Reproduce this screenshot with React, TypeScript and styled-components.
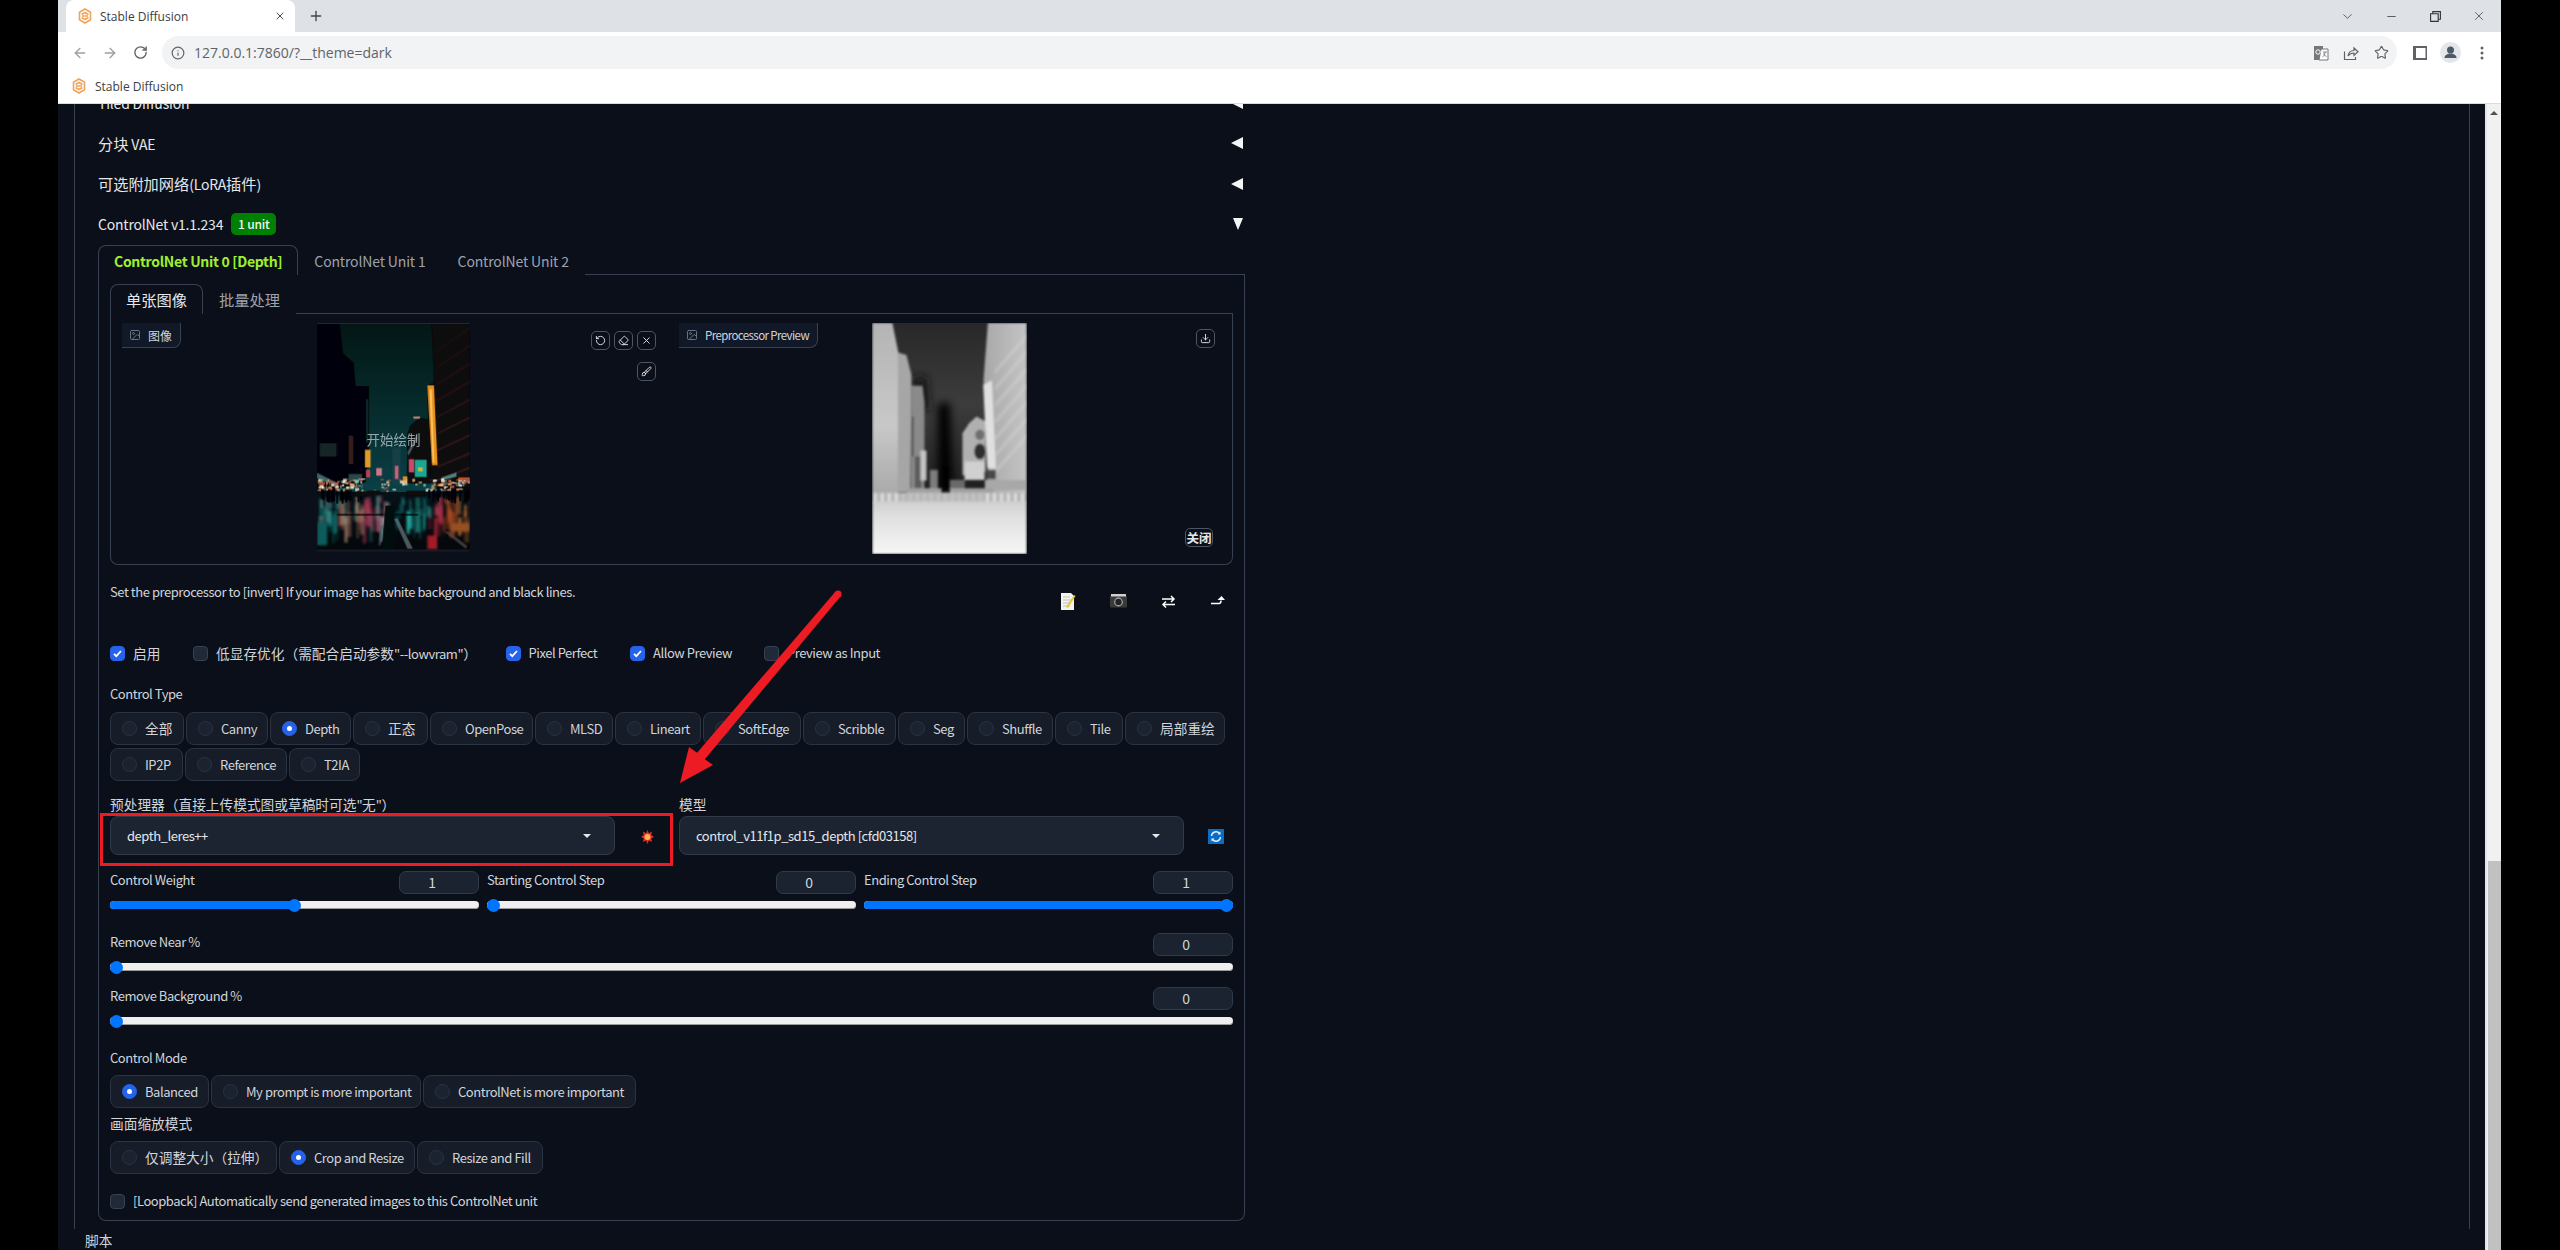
import React from "react";
import styled, { createGlobalStyle } from "styled-components";
import { ArrowLeft, ArrowRight, RotateCw, Info, Star, X, Plus, ChevronDown, Minus, Image as ImageIcon, RotateCcw, Eraser, Download, Brush } from "lucide-react";

const Global = createGlobalStyle`
  html, body { margin: 0; padding: 0; background: #000; }
  * { box-sizing: border-box; }
`;

const UI = `"Noto Sans CJK SC", "Noto Sans", sans-serif`;
const CHROME = `"Open Sans", "Liberation Sans", sans-serif`;

const Stage = styled.div`
  position: relative; width: 2560px; height: 1250px; background: #000; overflow: hidden;
  padding-left: 58px; font-family: ${UI};
`;
const Browser = styled.div`
  width: 2443px; height: 1250px; display: flex; flex-direction: column; background: #fff;
`;
const TabStrip = styled.div`
  height: 32px; background: #dee1e6; display: flex; align-items: center; padding-left: 8px; flex: none;
`;
const BrowserTab = styled.div`
  width: 229px; height: 32px; background: #fff; border-radius: 8px 8px 0 0; display: flex; align-items: center;
  padding: 0 9px 0 12px; gap: 8px; color: #3c4043; font: 12px ${CHROME};
`;
const TabClose = styled.span`margin-left: auto; display: flex; color: #444;`;
const NewTab = styled.span`margin-left: 13px; display: flex; color: #444;`;
const WindowControls = styled.div`margin-left: auto; display: flex;`;
const WinCell = styled.span`width: 44px; height: 26px; display: flex; align-items: center; justify-content: center; color: #333;`;
const Toolbar = styled.div`
  height: 38px; padding: 4px 0 1px 7px; display: flex; align-items: stretch; background: #fff; flex: none;
`;
const NavCell = styled.span<{ $off?: boolean }>`
  width: 30px; display: flex; align-items: center; justify-content: center; color: ${p => (p.$off ? "#9aa0a6" : "#5f6368")};
`;
const Omnibox = styled.div`
  margin-left: 7px; width: 2235px; border-radius: 17px; background: #f1f3f4; display: flex; align-items: center;
  padding: 0 1px 0 9px; color: #3c4043; font: 14px ${CHROME};
`;
const UrlText = styled.span`margin-left: 9px; color: #5f6368;`;
const OmniRight = styled.div`margin-left: auto; display: flex;`;
const ToolRight = styled.div`margin-left: 7px; display: flex;`;
const ToolCell = styled.span`width: 31px; display: flex; align-items: center; justify-content: center;`;
const Bookmarks = styled.div`
  height: 34px; padding: 0 0 1px 14px; display: flex; align-items: center; gap: 9px; border-bottom: 1px solid #dadce0;
  color: #3c4043; font: 12px ${CHROME}; flex: none;
`;
const Viewport = styled.div`flex: 1; display: flex; min-height: 0;`;
const Page = styled.div`
  flex: 1; background: #0b0f19; padding-left: 16px; overflow: hidden; min-width: 0;
`;
const Main = styled.div`
  position: relative; width: 2396px; height: 1146px; border-left: 1px solid #374151; border-right: 1px solid #374151; padding-left: 10px;
  font-size: 13px; letter-spacing: -0.45px;
`;
const ClippedButton = styled.div`position: absolute; top: 0; right: 14px; width: 45px; height: 1px; background: #6b7280;`;
const Scrollbar = styled.div`
  width: 16px; background: #f1f1f1; border-left: 2px solid #e4e4ee; display: flex; flex-direction: column; align-items: center; flex: none;
`;
const ScrollUp = styled.div`
  height: 0; width: 0; margin-top: 7px; border-left: 4px solid transparent; border-right: 4px solid transparent; border-bottom: 4px solid #505050;
`;
const ScrollThumb = styled.div`width: 13px; flex: 1; margin-top: 746px; background: #c1c1c1;`;

const Cn = styled.span`font-size: var(--cn, 13.7px); letter-spacing: 0;`;
const mix = (s: string) => s.split(/([\u3000-\u9fff\uff00-\uffef]+)/).map((p, i) => (i % 2 ? <Cn key={i}>{p}</Cn> : p));

const Column = styled.div`width: 1147px; margin-left: 13px;`;
const AccordionRows = styled.div`margin-top: -21px;`;
const Accordion = styled.div`
  --cn: 15.2px; height: 40.5px; display: flex; align-items: center; gap: 8px; padding: 0 2px 1px 0; color: #e5e7eb; font-size: 14px; letter-spacing: -0.2px; line-height: 20px;
`;
const Badge = styled.span`
  height: 22px; width: 45px; background: #008000; color: #f3f4f6; border-radius: 5px; font-size: 12px; font-weight: 500; letter-spacing: -0.2px; display: flex; align-items: center; justify-content: center;
`;
const TriLeft = styled.span`
  margin-left: auto; width: 0; height: 0; border-top: 6px solid transparent; border-bottom: 6px solid transparent; border-right: 12px solid #f3f4f6;
`;
const TriDown = styled.span`
  margin-left: auto; width: 0; height: 0; border-left: 5.5px solid transparent; border-right: 5.5px solid transparent; border-top: 12px solid #f3f4f6;
`;

const TabBar = styled.div`display: flex; height: 30px; border-bottom: 1px solid #374151;`;
const Tab = styled.div<{ $active?: boolean; $lime?: boolean; $cjk?: boolean }>`
  --cn: 15.25px; height: 30px; padding: 0 15px ${p => (p.$cjk ? "2px" : "0")}; display: flex; align-items: center; font-size: 14px; line-height: 20px; background: #0b0f19;
  letter-spacing: ${p => (p.$lime ? "-0.3px" : "-0.15px")};
  border: 1px solid ${p => (p.$active ? "#374151" : "transparent")}; border-bottom: none; border-radius: 8px 8px 0 0;
  color: ${p => (p.$active ? (p.$lime ? "#a0ef2e" : "#e5e7eb") : "#9ca3af")};
  font-weight: ${p => (p.$lime ? 600 : 400)};
  position: relative;
`;
const UnitPanel = styled.div`
  height: 946px; border: 1px solid #374151; border-top: none; border-radius: 0 0 8px 8px; padding: 9px 11px 0;
`;
const ImagePanel = styled.div`
  height: 251px; display: grid; grid-template-columns: 565px 556px; border: 1px solid #374151; border-top: none; border-radius: 0 0 8px 8px;
`;
const ImageCell = styled.div<{ $pr?: number }>`
  position: relative; display: flex; justify-content: center; align-items: flex-start; padding: 9px ${p => p.$pr ?? 0}px 0 0;
`;
const ImageTag = styled.div<{ $left: number }>`
  position: absolute; top: 9px; left: ${p => p.$left}px; height: 25px; display: flex; align-items: center; gap: 7px; padding: 0 8px 0 7px;
  background: #111827; border-right: 1px solid #374151; border-bottom: 1px solid #374151; border-radius: 0 0 8px 0;
  color: #d1d5db; --cn: 12px; font-size: 11.5px; letter-spacing: -0.6px; white-space: nowrap; svg { color: #6b7280; }
`;
const IconButton = styled.div<{ $x: number; $y: number; $w?: number }>`
  position: absolute; left: ${p => p.$x}px; top: ${p => p.$y}px; width: ${p => p.$w ?? 19}px; height: 19px;
  border: 1px solid #4b5563; border-radius: 5px; display: flex; align-items: center; justify-content: center; background: #0b0f19; color: #e5e7eb; --cn: 12.5px; font-weight: 700;
`;
const CanvasHint = styled.div`
  position: absolute; left: 0; width: 565px; top: 115px; text-align: center; color: rgba(205,210,215,.72); --cn: 13.5px; line-height: 20px;
`;
const HintRow = styled.div`height: 78px; padding: 17px 3px 0 0; display: flex; justify-content: space-between; align-items: flex-start;`;
const HintText = styled.div`color: #d1d5db; line-height: 20px;`;
const ToolGroup = styled.div`display: flex; gap: 26px; margin-top: 8px;`;
const ToolIcon = styled.span`width: 24px; height: 22px; display: flex; align-items: center; justify-content: center;`;
const CheckRow = styled.div<{ $mt?: number }>`display: flex; height: 20px; align-items: center; margin-top: ${p => p.$mt ?? 0}px;`;
const CheckItem = styled.label<{ $w?: number }>`
  display: flex; align-items: center; gap: 8px; width: ${p => (p.$w ? p.$w + "px" : "auto")}; color: #d1d5db; line-height: 20px; white-space: nowrap;
`;
const Box = styled.span<{ $on?: boolean }>`
  width: 15px; height: 15px; border-radius: 4px; flex: none; display: flex; align-items: center; justify-content: center;
  background: ${p => (p.$on ? "#2563eb" : "#1f2937")}; border: 1px solid ${p => (p.$on ? "#2563eb" : "#374151")};
`;
const FieldLabel = styled.div<{ $mt?: number }>`
  height: 20px; line-height: 19px; color: #d1d5db; white-space: nowrap; margin-top: ${p => p.$mt ?? 0}px;
`;
const RadioRow = styled.div<{ $mt?: number }>`display: flex; gap: 2px; margin-top: ${p => p.$mt ?? 0}px;`;
const Pill = styled.div<{ $w: number }>`
  width: ${p => p.$w}px; height: 33px; border-radius: 8px; border: 1px solid #2b3443; background: #161c28;
  display: flex; align-items: center; gap: 8px; padding-left: 11px; color: #d1d5db; white-space: nowrap; line-height: 19px;
`;
const Dot = styled.span<{ $on?: boolean }>`
  width: 15px; height: 15px; border-radius: 50%; flex: none; background: ${p => (p.$on ? "#2563eb" : "#1b2230")};
  border: 1px solid ${p => (p.$on ? "#2563eb" : "#2b3443")}; display: flex; align-items: center; justify-content: center;
  &::after { content: ""; width: 5px; height: 5px; border-radius: 50%; background: ${p => (p.$on ? "#fff" : "transparent")}; }
`;
const SelectGrid = styled.div`position: relative; display: grid; grid-template-columns: 569px 554px; margin-top: 14px;`;
const SelectRow = styled.div`display: flex; align-items: center; margin-top: 1px;`;
const Select = styled.div`
  width: 505px; height: 39px; border-radius: 8px; border: 1px solid #2f3a4a; background: #1c2431; display: flex; align-items: center;
  padding: 0 23px 0 16px; color: #e5e7eb; justify-content: space-between; line-height: 19px;
`;
const Caret = styled.span`width: 0; height: 0; border-left: 4px solid transparent; border-right: 4px solid transparent; border-top: 4px solid #e5e7eb;`;
const SideIcon = styled.span<{ $ml: number }>`margin: 2px 0 0 ${p => p.$ml}px; display: flex;`;
const RedBox = styled.div`
  position: absolute; left: -10px; top: 18px; width: 573px; height: 53px; border: 3px solid #ed1c24; pointer-events: none;
`;
const SliderTriple = styled.div`display: grid; grid-template-columns: repeat(3, 369px); gap: 8px; margin-top: 16px;`;
const SliderBlock = styled.div<{ $mt?: number }>`margin-top: ${p => p.$mt ?? 0}px;`;
const SliderHead = styled.div`display: flex; justify-content: space-between; height: 23px;`;
const SliderLabel = styled.span`line-height: 17px; color: #d1d5db;`;
const NumberBox = styled.div`
  width: 80px; height: 23px; border: 1px solid #2f3a4a; border-radius: 7px; background: #1b2330; color: #d1d5db; line-height: 21px; font-size: 14px;
  text-align: center; padding-right: 14px;
`;
const Track = styled.div`
  position: relative; height: 8px; margin-top: 7px; border-radius: 4px; background: #efefef; box-shadow: inset 0 -1px 0 #9a9a9a;
`;
const Fill = styled.div`height: 8px; border-radius: 4px; background: #0075ff;`;
const Thumb = styled.div`
  position: absolute; top: -2.5px; width: 13px; height: 13px; margin-left: -6.5px; border-radius: 50%; background: #0075ff;
`;
const ScriptLabel = styled.div`height: 20px; line-height: 20px; color: #d1d5db; margin: 9px 0 0 -13px;`;
const Overlay = styled.svg`position: absolute; left: 0; top: 0; pointer-events: none;`;

const Favicon = () => (
  <svg width="14" height="16" viewBox="0 0 14 16" fill="none" stroke="#f0a35a" strokeWidth="1.6">
    <path d="M7 1l5.5 3.2v7.6L7 15l-5.5-3.2V4.2z" />
    <path d="M3.5 6.5L7 4.5l3.5 2M3.5 9.5L7 11.5l3.5-2M4 8h6" />
  </svg>
);
const Translate = () => (
  <svg width="16" height="16" viewBox="0 0 16 16">
    <path d="M1 1h9v14H1z" fill="#777" />
    <path d="M8 4h7v11H6z" fill="#fff" stroke="#777" strokeWidth="1" />
    <circle cx="5" cy="7" r="2.2" fill="none" stroke="#fff" strokeWidth="1" />
    <path d="M10 7h4M12 7c0 3-1 4-2.5 5M10.5 8.5c.6 1.4 1.8 2.6 3 3.2" fill="none" stroke="#777" strokeWidth=".9" />
  </svg>
);
const ShareIco = () => (
  <svg width="16" height="16" viewBox="0 0 16 16" fill="none" stroke="#5f6368" strokeWidth="1.2">
    <path d="M1.5 6.5v8h11V12" />
    <path d="M5 11c.5-3.500 3-5.500 6-5.500V3l4 3.800-4 3.700V8C8.500 8 6.500 9 5 11z" />
  </svg>
);
const SidePanelIco = () => (
  <svg width="14" height="14" viewBox="0 0 14 14"><path d="M0 0h14v14H0z" fill="#5f6368" /><path d="M3 2h9.500v10H3z" fill="#fff" /></svg>
);
const Avatar = () => (
  <svg width="21" height="21" viewBox="0 0 21 21">
    <circle cx="10.500" cy="10.500" r="10.500" fill="#e3e6eb" />
    <circle cx="10.500" cy="8" r="3.500" fill="#4e5a68" />
    <path d="M4.500 16c0-3 3-4.500 6-4.500s6 1.500 6 4.500z" fill="#4e5a68" />
  </svg>
);
const Kebab = () => (
  <svg width="4" height="14" viewBox="0 0 4 14" fill="#5f6368"><circle cx="2" cy="2" r="1.500" /><circle cx="2" cy="7" r="1.500" /><circle cx="2" cy="12" r="1.500" /></svg>
);
const Restore = () => (
  <svg width="11" height="11" viewBox="0 0 11 11" fill="none" stroke="#333" strokeWidth="1.100">
    <path d="M.6 2.800h7.600v7.600H.6z" /><path d="M2.800 2.800V.6h7.600v7.600H8.200" />
  </svg>
);
const Tick = () => (
  <svg width="11" height="11" viewBox="0 0 11 11" fill="none" stroke="#fff" strokeWidth="1.800"><path d="M2 5.800l2.300 2.300L9 3" /></svg>
);
const Boom = () => (
  <svg width="13" height="14" viewBox="0 0 14 15">
    <path d="M7 0l1.500 3.500L12 1.500l-1 3.800L14 7.500l-3 1.500 1 4-3.500-1.800L7 15l-1.500-3.800L2 13l1-4-3-1.500 3-2.200-1-3.800 3.500 2z" fill="#e0301e" />
    <circle cx="7" cy="7.500" r="3.200" fill="#ffb45a" />
  </svg>
);
const Refresh = () => (
  <svg width="16" height="15" viewBox="0 0 16 15">
    <rect width="16" height="15" fill="#0a6cc4" />
    <path d="M3.500 7a4.500 4.500 0 0 1 8-2.500M12.500 8a4.500 4.500 0 0 1-8 2.500" fill="none" stroke="#e6f2ff" strokeWidth="1.400" />
    <path d="M12.500 2.500v3h-3zM3.500 12.500v-3h3z" fill="#e6f2ff" />
  </svg>
);
const Memo = () => (
  <svg width="16" height="19" viewBox="0 0 16 19">
    <path d="M1 1h10l3 3v14H1z" fill="#f4f4ee" />
    <path d="M3 5h7M3 8h8M3 11h6M3 14h7" stroke="#bdbdbd" strokeWidth="1" />
    <path d="M6 15L14 3l1.500 1L8 16z" fill="#e8c63a" />
  </svg>
);
const Camera = () => (
  <svg width="17" height="14" viewBox="0 0 17 14">
    <rect x="0" y="1.500" width="17" height="12" rx="1" fill="#3a3a3a" />
    <rect x="1" y="0" width="15" height="2.500" fill="#cfcfcf" />
    <circle cx="8.500" cy="8" r="3.800" fill="#222" stroke="#aaa" strokeWidth="1.200" />
  </svg>
);
const Swap = () => (
  <svg width="15" height="15" viewBox="0 0 15 15" fill="none" stroke="#fff" strokeWidth="1.500">
    <path d="M1 5h12M10 2l3 3-3 3" /><path d="M14 10.500H2M5 7.500l-3 3 3 3" />
  </svg>
);
const Corner = () => (
  <svg width="15" height="12" viewBox="0 0 15 12" fill="none">
    <path d="M0 8.500h8c1.500 0 2-1 2-3" stroke="#fff" strokeWidth="1.500" />
    <path d="M6.500 5L10.500 1l3.500 4z" fill="#fff" />
  </svg>
);

/* Deterministic pseudo-random values for the photo-like drawing. */
const lcg = (seed: number) => {
  let s = seed;
  return () => {
    s = (s * 1664525 + 1013904223) % 4294967296;
    return s / 4294967296;
  };
};
const pick = <T,>(r: () => number, list: T[]) => list[Math.floor(r() * list.length)];

const streakColor = (x: number, r: () => number) => {
  if (x < 55) return pick(r, ["#13807c", "#0f6a68", "#7fb0ae"]);
  if (x < 135) return pick(r, ["#a06a58", "#8a4a44", "#2a8e88", "#c89a80"]);
  if (x < 170) return pick(r, ["#b03a58", "#a84a60", "#2a8e88"]);
  if (x < 215) return pick(r, ["#b0c4c8", "#2a9a98", "#a85068"]);
  if (x < 335) return pick(r, ["#16a098", "#1c8c88", "#0f6e6c", "#2ab8a8"]);
  if (x < 375) return pick(r, ["#d03048", "#b82238", "#c04058"]);
  return pick(r, ["#a8401e", "#c86a28", "#8e2e28", "#d07830"]);
};

const cityLights = (() => {
  const r = lcg(7);
  const out: { x: number; y: number; w: number; h: number; c: string }[] = [];
  for (let i = 0; i < 170; i++) {
    const side = r();
    const x = side < 0.45 ? r() * 135 : side < 0.85 ? 335 + r() * 125 : 170 + r() * 165;
    out.push({ x, y: 478 + r() * 36, w: 3 + r() * 9, h: 2 + r() * 7, c: pick(r, ["#f7e8d4", "#ffb878", "#e0604e", "#7ed8d0", "#ffffff", "#f0a050", "#586f70"]) });
  }
  return out;
})();

const streaks = (() => {
  const r = lcg(23);
  const out: { x: number; y: number; w: number; h: number; c: string; o: number }[] = [];
  for (let i = 0; i < 140; i++) {
    const x = r() * 460;
    if (x > 206 && x < 232) continue;
    out.push({ x, y: 530 + r() * 70, w: 4 + r() * 12, h: 16 + r() * 70, c: streakColor(x, r), o: 0.2 + r() * 0.5 });
  }
  return out;
})();

const crowd = (() => {
  const r = lcg(41);
  return Array.from({ length: 46 }).map(() => {
    const x = r() < 0.5 ? r() * 130 : 330 + r() * 130;
    return { x, y: 512 + r() * 10, h: 20 + r() * 16 };
  });
})();

const CityImage = () => (
  <svg width="153" height="229" viewBox="0 10 460 690">
    <defs>
      <linearGradient id="sky" x1="0" y1="0" x2="0" y2="1">
        <stop offset="0" stopColor="#031615" /><stop offset=".5" stopColor="#062b2c" /><stop offset="1" stopColor="#0a4046" />
      </linearGradient>
      <linearGradient id="road" x1="0" y1="0" x2="0" y2="1">
        <stop offset="0" stopColor="#061219" /><stop offset="1" stopColor="#04070a" />
      </linearGradient>
      <filter id="b1" x="-10%" y="-10%" width="120%" height="120%"><feGaussianBlur stdDeviation="2" /></filter>
      <filter id="b3" x="-10%" y="-10%" width="120%" height="120%"><feGaussianBlur stdDeviation="3.500" /></filter>
    </defs>
    <rect x="0" y="10" width="460" height="690" fill="#05070a" />
    <rect x="60" y="10" width="300" height="510" fill="url(#sky)" />
    <g filter="url(#b1)">
      <path d="M0 10h68l10 92 32 28 6 70h40v200l-10 90L0 525z" fill="#050608" />
      <path d="M112 205h38v240h-38z" fill="#040609" />
      <path d="M8 372h50v40H8z" fill="#1d3a3c" opacity=".6" />
      <path d="M96 350h12v85H96z" fill="#5a3028" opacity=".6" />
      <path d="M148 240h5v130h-5z" fill="#264a4c" opacity=".6" />
      <path d="M345 10h115v495l-120-15-8-290 20-12z" fill="#0f090b" />
      {[60, 110, 160, 210, 260, 310, 360, 410, 450].map((y, i) => (
        <path key={y} d={`M362 ${y + 30}L460 ${y - 40 + i * 4}v9L362 ${y + 37}z`} fill="#33191e" opacity={0.35 + i * 0.06} />
      ))}
      <path d="M225 385h28v115h-28z" fill="#144046" opacity=".85" />
      <path d="M272 345l8-25 30-25 32 8v190h-72z" fill="#07090c" />
      <path d="M290 292h20v6h-20z" fill="#e08a7a" />
      <path d="M272 400l30-60v20l-26 50z" fill="#47545a" />
      <path d="M332 198h20l11 240h-17z" fill="#e8901f" />
      <path d="M339 210h6l8 220h-5z" fill="#ffc860" />
      <path d="M144 392h17v53h-17z" fill="#e09a2a" />
      <path d="M147 452h13v23h-13z" fill="#b84252" />
      <path d="M294 422h36v52h-36z" fill="#1ea794" />
      <path d="M304 445h14v12h-14z" fill="#c8b848" />
      <path d="M276 420h16v40h-16z" fill="#c84a68" />
      <path d="M234 440h11v40h-11z" fill="#c86076" />
      <path d="M178 447h17v23h-17z" fill="#c87a8a" />
      <path d="M258 472h14v23h-14z" fill="#d8902a" />
      <path d="M0 462l60 30v8L0 478z" fill="#456466" />
      <path d="M95 465h40v22H95z" fill="#2c4648" />
      <path d="M375 475l45-15v13l-45 12z" fill="#4f7f76" />
      <path d="M425 475h35v15h-35z" fill="#c25026" />
      {cityLights.map((l, i) => <rect key={i} x={l.x} y={l.y} width={l.w} height={l.h} fill={l.c} opacity=".8" />)}
    </g>
    <path d="M0 520h460v180H0z" fill="url(#road)" />
    <g filter="url(#b3)">
      {streaks.map((s, i) => <rect key={i} x={s.x} y={s.y} width={s.w} height={s.h} fill={s.c} opacity={s.o} />)}
      <path d="M332 650h30v42h-30z" fill="#a01c28" />
      <path d="M0 610h30v70H0z" fill="#0f5c5c" />
      <path d="M405 612h55v26h-55z" fill="#985024" />
    </g>
    <g filter="url(#b1)">
      {crowd.map((c, i) => <rect key={i} x={c.x} y={c.y} width="6" height={c.h} fill="#030508" />)}
      <path d="M110 518h40v14h-40zM150 515h40v12h-40zM270 515h55v16h-55z" fill="#080b10" />
      <path d="M206 560h26v135h-38z" fill="#04080c" />
      <path d="M232 600l10-2 46 92h-16z" fill="#6c7a80" opacity=".7" />
      <path d="M190 620h10l-8 60h-8z" fill="#3d5a60" opacity=".6" />
      <path d="M385 640l10-3 58 45-6 8z" fill="#5a4a48" opacity=".7" />
      <path d="M60 585h140v5H60zM235 585h70v5h-70z" fill="#030507" opacity=".8" />
    </g>
    <rect x="0" y="10" width="460" height="3" fill="#1f2937" />
    <rect x="0" y="692" width="460" height="8" fill="#1f2937" opacity=".6" />
  </svg>
);

const DepthImage = () => (
  <svg width="155" height="231" viewBox="8 10 462 692">
    <defs>
      <linearGradient id="dsky" x1="0" y1="0" x2="0" y2="1">
        <stop offset="0" stopColor="#282828" /><stop offset=".35" stopColor="#3c3c3c" /><stop offset=".75" stopColor="#1c1c1c" />
      </linearGradient>
      <linearGradient id="dground" x1="0" y1="0" x2="0" y2="1">
        <stop offset="0" stopColor="#cfcfcf" /><stop offset=".25" stopColor="#dedede" /><stop offset="1" stopColor="#f7f7f7" />
      </linearGradient>
      <linearGradient id="dleft" x1="0" y1="0" x2="0" y2="1">
        <stop offset="0" stopColor="#b4b4b4" /><stop offset=".6" stopColor="#c8c8c8" /><stop offset="1" stopColor="#aaa" />
      </linearGradient>
      <linearGradient id="dright" x1="0" y1="0" x2="1" y2="0">
        <stop offset="0" stopColor="#a8a8a8" /><stop offset="1" stopColor="#c4c4c4" />
      </linearGradient>
      <filter id="d1" x="-10%" y="-10%" width="120%" height="120%"><feGaussianBlur stdDeviation="3.500" /></filter>
      <filter id="d2" x="-20%" y="-20%" width="140%" height="140%"><feGaussianBlur stdDeviation="12" /></filter>
    </defs>
    <rect x="8" y="10" width="462" height="692" fill="url(#dsky)" />
    <g filter="url(#d2)">
      <path d="M205 250h35l10 270h-45z" fill="#030303" />
      <path d="M130 170h40l10 100h-40z" fill="#151515" />
    </g>
    <g filter="url(#d1)">
      <path d="M125 198h33l6 50v260h-40z" fill="#8a8a8a" />
      <path d="M122 290h10v120h-10z" fill="#5a5a5a" />
      <path d="M135 410h20v100h-20z" fill="#5c5c5c" />
      <path d="M152 392h18v90h-18z" fill="#c4c4c4" />
      <path d="M180 450h24v70h-24z" fill="#7c7c7c" />
      <path d="M354 10h116v510H345l10-60-14-280z" fill="url(#dright)" />
      {[40, 90, 140, 190, 240, 290, 340].map(y => (
        <path key={y} d={`M375 ${y + 110}L470 ${y}v18L375 ${y + 124}z`} fill="#d4d4d4" opacity=".4" />
      ))}
      <path d="M278 340l20-30 22-20 27 15v150l-69 12z" fill="#b0b0b0" />
      <ellipse cx="330" cy="345" rx="14" ry="16" fill="#6e6e6e" />
      <ellipse cx="330" cy="395" rx="17" ry="24" fill="#2e2e2e" />
      <path d="M284 425h60v55h-60z" fill="#d0d0d0" />
      <path d="M340 195l26-13 12 264h-26z" fill="#e0e0e0" />
      <path d="M350 450h28v28h-28z" fill="#4a4a4a" />
      <path d="M345 480h125v30H345z" fill="#a8a8a8" />
      <path d="M240 480h45v35h-45z" fill="#6a6a6a" />
      <path d="M8 10h60l18 90v420H8z" fill="url(#dleft)" />
      <path d="M85 98l25 8 15 60-3 350H85z" fill="#a6a6a6" />
      <path d="M110 505h105v20H110zM240 505h130v20H240z" fill="#a0a0a0" />
      <path d="M8 518h462v32H8z" fill="#b8b8b8" />
      {Array.from({ length: 22 }).map((_, i) => (
        <path key={i} d={`M${12 + i * 21} 520h9v28h-9z`} fill="#e2e2e2" opacity={i > 3 && i < 16 ? 0.25 : 0.85} />
      ))}
      <path d="M8 545h462v157H8z" fill="url(#dground)" />
      <path d="M218 440h18l-6 80z" fill="#000" />
    </g>
  </svg>
);

type SliderProps = { label?: string; value: string; pct: number };
const Slider = ({ label, value, pct }: SliderProps) => (
  <>
    <SliderHead>
      <SliderLabel>{label}</SliderLabel>
      <NumberBox>{value}</NumberBox>
    </SliderHead>
    <Track>
      {pct > 0 && <Fill style={{ width: `${pct}%` }} />}
      <Thumb style={{ left: `calc(6.5px + (100% - 13px) * ${pct / 100})` }} />
    </Track>
  </>
);

type RadioItem = [string, number, boolean?];
const Radios = ({ items, mt }: { items: RadioItem[]; mt?: number }) => (
  <RadioRow $mt={mt}>
    {items.map(([t, w, on]) => (
      <Pill key={t} $w={w}><Dot $on={on} /><span>{mix(t)}</span></Pill>
    ))}
  </RadioRow>
);

const Check = ({ on, w, text }: { on?: boolean; w?: number; text: string }) => (
  <CheckItem $w={w}><Box $on={on}>{on && <Tick />}</Box><span>{mix(text)}</span></CheckItem>
);

const row1: RadioItem[] = [["全部", 74], ["Canny", 82], ["Depth", 81, true], ["正态", 75], ["OpenPose", 103], ["MLSD", 78], ["Lineart", 86], ["SoftEdge", 98], ["Scribble", 93], ["Seg", 67], ["Shuffle", 86], ["Tile", 68], ["局部重绘", 100]];
const row2: RadioItem[] = [["IP2P", 73], ["Reference", 102], ["T2IA", 71]];
const modes: RadioItem[] = [["Balanced", 99, true], ["My prompt is more important", 210], ["ControlNet is more important", 213]];
const resize: RadioItem[] = [["仅调整大小（拉伸）", 167], ["Crop and Resize", 136, true], ["Resize and Fill", 126]];

export default function App() {
  return (
    <Stage>
      <Global />
      <Browser>
        <TabStrip>
          <BrowserTab>
            <Favicon />Stable Diffusion
            <TabClose><X size={12} strokeWidth={2} /></TabClose>
          </BrowserTab>
          <NewTab><Plus size={16} strokeWidth={2} /></NewTab>
          <WindowControls>
            <WinCell><ChevronDown size={15} strokeWidth={1.2} /></WinCell>
            <WinCell><Minus size={13} strokeWidth={1.4} /></WinCell>
            <WinCell><Restore /></WinCell>
            <WinCell><X size={14} strokeWidth={1.2} /></WinCell>
          </WindowControls>
        </TabStrip>
        <Toolbar>
          <NavCell $off><ArrowLeft size={16} /></NavCell>
          <NavCell $off><ArrowRight size={16} /></NavCell>
          <NavCell><RotateCw size={15} strokeWidth={2.2} /></NavCell>
          <Omnibox>
            <Info size={14} color="#5f6368" />
            <UrlText>127.0.0.1:7860/?__theme=dark</UrlText>
            <OmniRight>
              <NavCell><Translate /></NavCell>
              <NavCell><ShareIco /></NavCell>
              <NavCell><Star size={15} strokeWidth={1.8} color="#5f6368" /></NavCell>
            </OmniRight>
          </Omnibox>
          <ToolRight>
            <ToolCell><SidePanelIco /></ToolCell>
            <ToolCell><Avatar /></ToolCell>
            <ToolCell><Kebab /></ToolCell>
          </ToolRight>
        </Toolbar>
        <Bookmarks><Favicon />Stable Diffusion</Bookmarks>
        <Viewport>
          <Page>
            <Main>
              <ClippedButton />
              <Column>
                <AccordionRows>
                  <Accordion>Tiled Diffusion<TriLeft /></Accordion>
                  <Accordion><span>{mix("分块 VAE")}</span><TriLeft /></Accordion>
                  <Accordion><span>{mix("可选附加网络(LoRA插件)")}</span><TriLeft /></Accordion>
                  <Accordion>ControlNet v1.1.234<Badge>1 unit</Badge><TriDown /></Accordion>
                </AccordionRows>
                <TabBar>
                  <Tab $active $lime>ControlNet Unit 0 [Depth]</Tab>
                  <Tab>ControlNet Unit 1</Tab>
                  <Tab>ControlNet Unit 2</Tab>
                </TabBar>
                <UnitPanel>
                  <TabBar>
                    <Tab $active $cjk><Cn>单张图像</Cn></Tab>
                    <Tab $cjk><Cn>批量处理</Cn></Tab>
                  </TabBar>
                  <ImagePanel>
                    <ImageCell>
                      <ImageTag $left={11}><ImageIcon size={12} /><Cn>图像</Cn></ImageTag>
                      <CityImage />
                      <CanvasHint><Cn>开始绘制</Cn></CanvasHint>
                      <IconButton $x={480} $y={17}><RotateCcw size={11} /></IconButton>
                      <IconButton $x={503} $y={17}><Eraser size={11} /></IconButton>
                      <IconButton $x={526} $y={17}><X size={11} /></IconButton>
                      <IconButton $x={526} $y={48}><Brush size={11} /></IconButton>
                    </ImageCell>
                    <ImageCell $pr={9}>
                      <ImageTag $left={3}><ImageIcon size={12} />Preprocessor Preview</ImageTag>
                      <DepthImage />
                      <IconButton $x={520} $y={15}><Download size={11} /></IconButton>
                      <IconButton $x={509} $y={214} $w={28}><Cn>关闭</Cn></IconButton>
                    </ImageCell>
                  </ImagePanel>
                  <HintRow>
                    <HintText>Set the preprocessor to [invert] If your image has white background and black lines.</HintText>
                    <ToolGroup>
                      <ToolIcon><Memo /></ToolIcon>
                      <ToolIcon><Camera /></ToolIcon>
                      <ToolIcon><Swap /></ToolIcon>
                      <ToolIcon><Corner /></ToolIcon>
                    </ToolGroup>
                  </HintRow>
                  <CheckRow>
                    <Check on w={83} text="启用" />
                    <Check w={312.5} text={'低显存优化（需配合启动参数"--lowvram"）'} />
                    <Check on w={124.5} text="Pixel Perfect" />
                    <Check on w={134} text="Allow Preview" />
                    <Check text="Preview as Input" />
                  </CheckRow>
                  <FieldLabel $mt={21}>Control Type</FieldLabel>
                  <Radios items={row1} mt={8} />
                  <Radios items={row2} mt={3} />
                  <SelectGrid>
                    <div>
                      <FieldLabel>{mix('预处理器（直接上传模式图或草稿时可选"无"）')}</FieldLabel>
                      <SelectRow>
                        <Select>depth_leres++<Caret /></Select>
                        <SideIcon $ml={26}><Boom /></SideIcon>
                      </SelectRow>
                    </div>
                    <div>
                      <FieldLabel>{mix("模型")}</FieldLabel>
                      <SelectRow>
                        <Select>control_v11f1p_sd15_depth [cfd03158]<Caret /></Select>
                        <SideIcon $ml={24}><Refresh /></SideIcon>
                      </SelectRow>
                    </div>
                    <RedBox />
                  </SelectGrid>
                  <SliderTriple>
                    <div><Slider label="Control Weight" value="1" pct={50} /></div>
                    <div><Slider label="Starting Control Step" value="0" pct={0} /></div>
                    <div><Slider label="Ending Control Step" value="1" pct={100} /></div>
                  </SliderTriple>
                  <SliderBlock $mt={24}><Slider label="Remove Near %" value="0" pct={0} /></SliderBlock>
                  <SliderBlock $mt={16}><Slider label="Remove Background %" value="0" pct={0} /></SliderBlock>
                  <FieldLabel $mt={23}>Control Mode</FieldLabel>
                  <Radios items={modes} mt={7} />
                  <FieldLabel $mt={6}>{mix("画面缩放模式")}</FieldLabel>
                  <Radios items={resize} mt={7} />
                  <CheckRow $mt={17}>
                    <Check text="[Loopback] Automatically send generated images to this ControlNet unit" />
                  </CheckRow>
                </UnitPanel>
                <ScriptLabel><Cn>脚本</Cn></ScriptLabel>
              </Column>
            </Main>
          </Page>
          <Scrollbar>
            <ScrollUp />
            <ScrollThumb />
          </Scrollbar>
        </Viewport>
      </Browser>
      <Overlay width="2560" height="1250" viewBox="0 0 2560 1250">
        <circle cx="838" cy="594" r="3.600" fill="#ed1c24" />
        <path d="M835.300 591.800L697.100 752.800 689 747 680 783 713 765 704.900 759.200 840.700 596.200z" fill="#ed1c24" />
      </Overlay>
    </Stage>
  );
}
